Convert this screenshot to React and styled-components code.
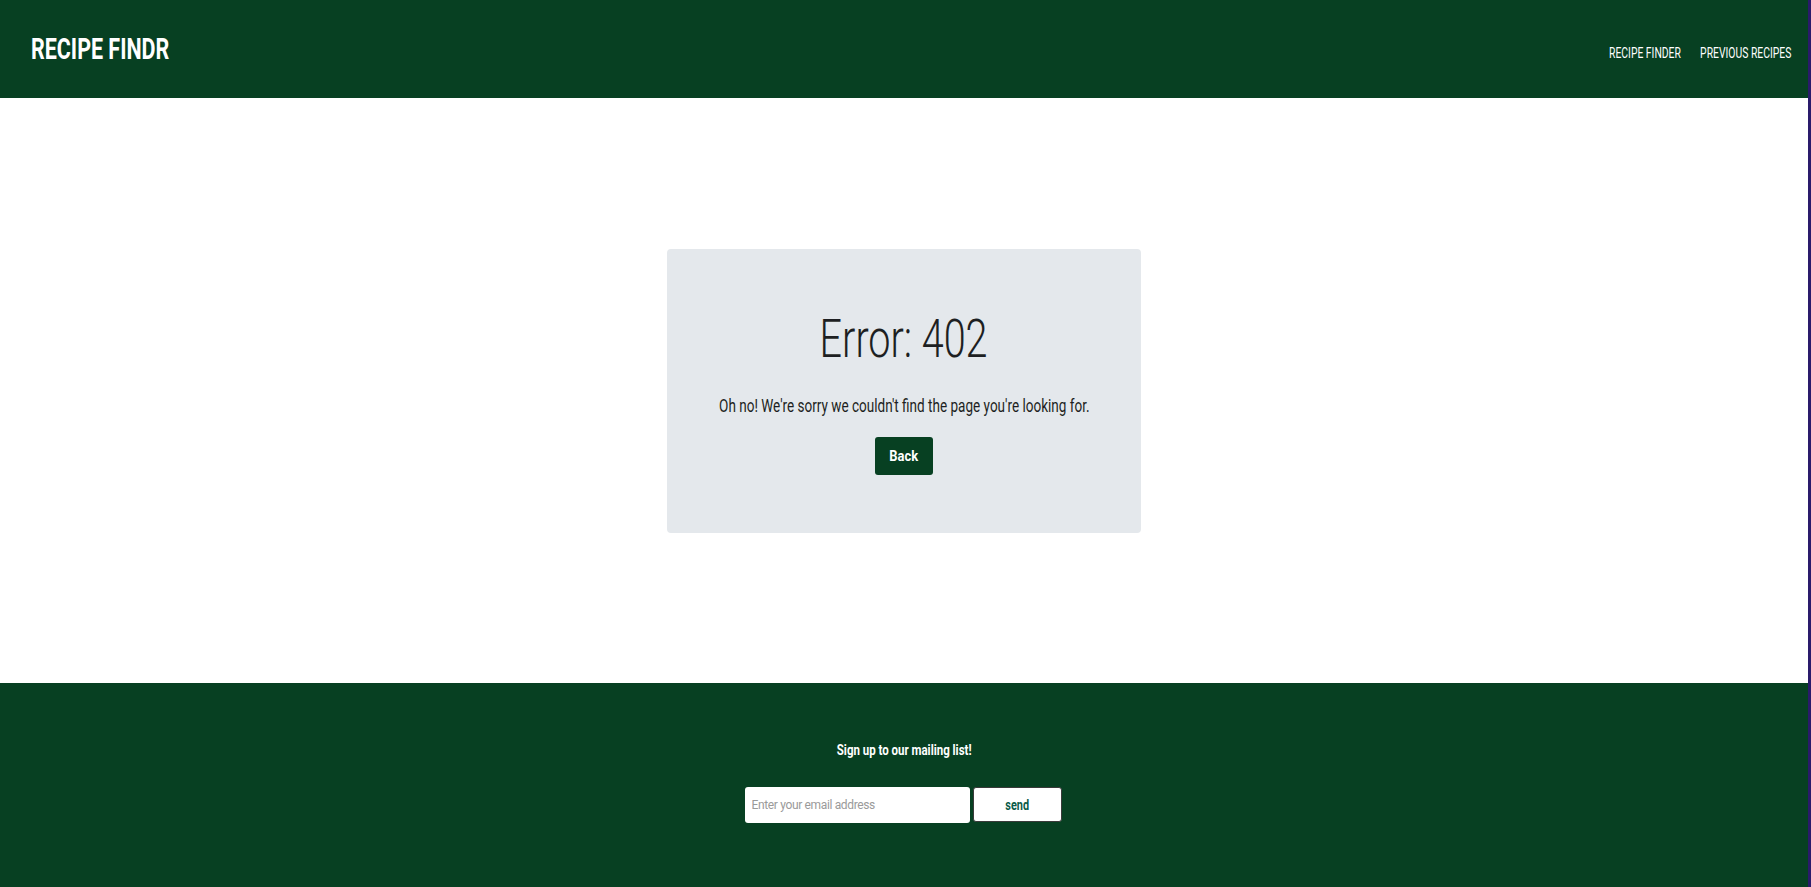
import styled, { createGlobalStyle } from "styled-components";

const GlobalStyle = createGlobalStyle`
  html, body {
    margin: 0;
    padding: 0;
    background-color: #2a1b6b;
  }
  * {
    box-sizing: border-box;
  }
`;

const FONT = `Roboto, "Liberation Sans", sans-serif`;

// the design uses a condensed face; squeeze Roboto horizontally to match it
const Narrow = styled.span`
  display: inline-block;
  white-space: nowrap;
  transform: scaleX(${(p) => p.$scale || 0.75});
  transform-origin: ${(p) => p.$origin || "center"} center;
`;

const App = () => {
  return (
    <>
      <GlobalStyle />
      <Page>
        <Header>
          <Logo>
            <Narrow $scale={0.74} $origin="left">RECIPE FINDR</Narrow>
          </Logo>
          <Nav>
            <NavLink href="#">RECIPE FINDER</NavLink>
            <NavLink href="#">PREVIOUS RECIPES</NavLink>
          </Nav>
        </Header>
        <Main>
          <ErrorCard>
            <ErrorTitle>
              <Narrow $scale={0.746}>Error: 402</Narrow>
            </ErrorTitle>
            <ErrorText>
              <Narrow $scale={0.752}>Oh no! We're sorry we couldn't find the page you're looking for.</Narrow>
            </ErrorText>
            <BackButton>
              <Narrow $scale={0.86}>Back</Narrow>
            </BackButton>
          </ErrorCard>
        </Main>
        <Footer>
          <FooterTitle>
            <Narrow $scale={0.82}>Sign up to our mailing list!</Narrow>
          </FooterTitle>
          <SignupForm onSubmit={(e) => e.preventDefault()}>
            <EmailInput type="email" placeholder="Enter your email address" />
            <SendButton type="submit">
              <Narrow $scale={0.78}>send</Narrow>
            </SendButton>
          </SignupForm>
        </Footer>
      </Page>
    </>
  );
};

export default App;

const Page = styled.div`
  width: calc(100% - 3px);
  min-height: 887px;
  display: flex;
  flex-direction: column;
  background-color: white;
  font-family: ${FONT};
`;

const Header = styled.header`
  height: 98px;
  background-color: #074022;
  display: flex;
  align-items: center;
  justify-content: space-between;
  padding: 0 17px 0 31px;
`;

const Logo = styled.h1`
  margin: 0;
  font-size: 29px;
  font-weight: 700;
  line-height: 34px;
  color: white;
`;

const Nav = styled.nav`
  display: flex;
  gap: 26px;
  margin-top: 8px;
  transform: scaleX(0.74);
  transform-origin: right center;
`;

const NavLink = styled.a`
  font-size: 14px;
  color: white;
  text-decoration: none;
  white-space: nowrap;
`;

const Main = styled.main`
  height: 585px;
  display: flex;
  align-items: center;
  justify-content: center;
`;

const ErrorCard = styled.div`
  width: 474px;
  height: 284px;
  background-color: #e4e8ec;
  border-radius: 4px;
  display: flex;
  flex-direction: column;
  align-items: center;
  padding-top: 58px;
  color: #1d1f22;
`;

const ErrorTitle = styled.h2`
  margin: 0;
  font-size: 53px;
  font-weight: 300;
  line-height: 64px;
`;

const ErrorText = styled.p`
  margin: 24px 0 0;
  font-size: 18px;
  line-height: 22px;
  white-space: nowrap;
`;

const BackButton = styled.button`
  margin-top: 20px;
  width: 58px;
  height: 38px;
  border: none;
  border-radius: 3px;
  background-color: #074022;
  color: white;
  font-family: ${FONT};
  font-size: 15px;
  font-weight: 700;
  padding: 0;
  cursor: pointer;
`;

const Footer = styled.footer`
  flex: 1;
  background-color: #074022;
  display: flex;
  flex-direction: column;
  align-items: center;
  padding-top: 59px;
`;

const FooterTitle = styled.h3`
  margin: 0;
  color: white;
  font-size: 14px;
  font-weight: 700;
  line-height: 16px;
`;

const SignupForm = styled.form`
  display: flex;
  gap: 3px;
  margin-top: 29px;
  margin-right: 2px;
`;

const EmailInput = styled.input`
  width: 225px;
  height: 36px;
  border: none;
  border-radius: 3px;
  padding: 0 7px;
  font-family: ${FONT};
  font-size: 12px;
  letter-spacing: -0.35px;
  color: #333;

  &::placeholder {
    color: #9a9a9a;
  }
`;

const SendButton = styled.button`
  width: 89px;
  height: 35px;
  border: 1px solid #3a3a3a;
  border-radius: 3px;
  background-color: white;
  color: #0b5b48;
  font-family: ${FONT};
  font-size: 14px;
  font-weight: 700;
  padding: 0;
  cursor: pointer;
`;
